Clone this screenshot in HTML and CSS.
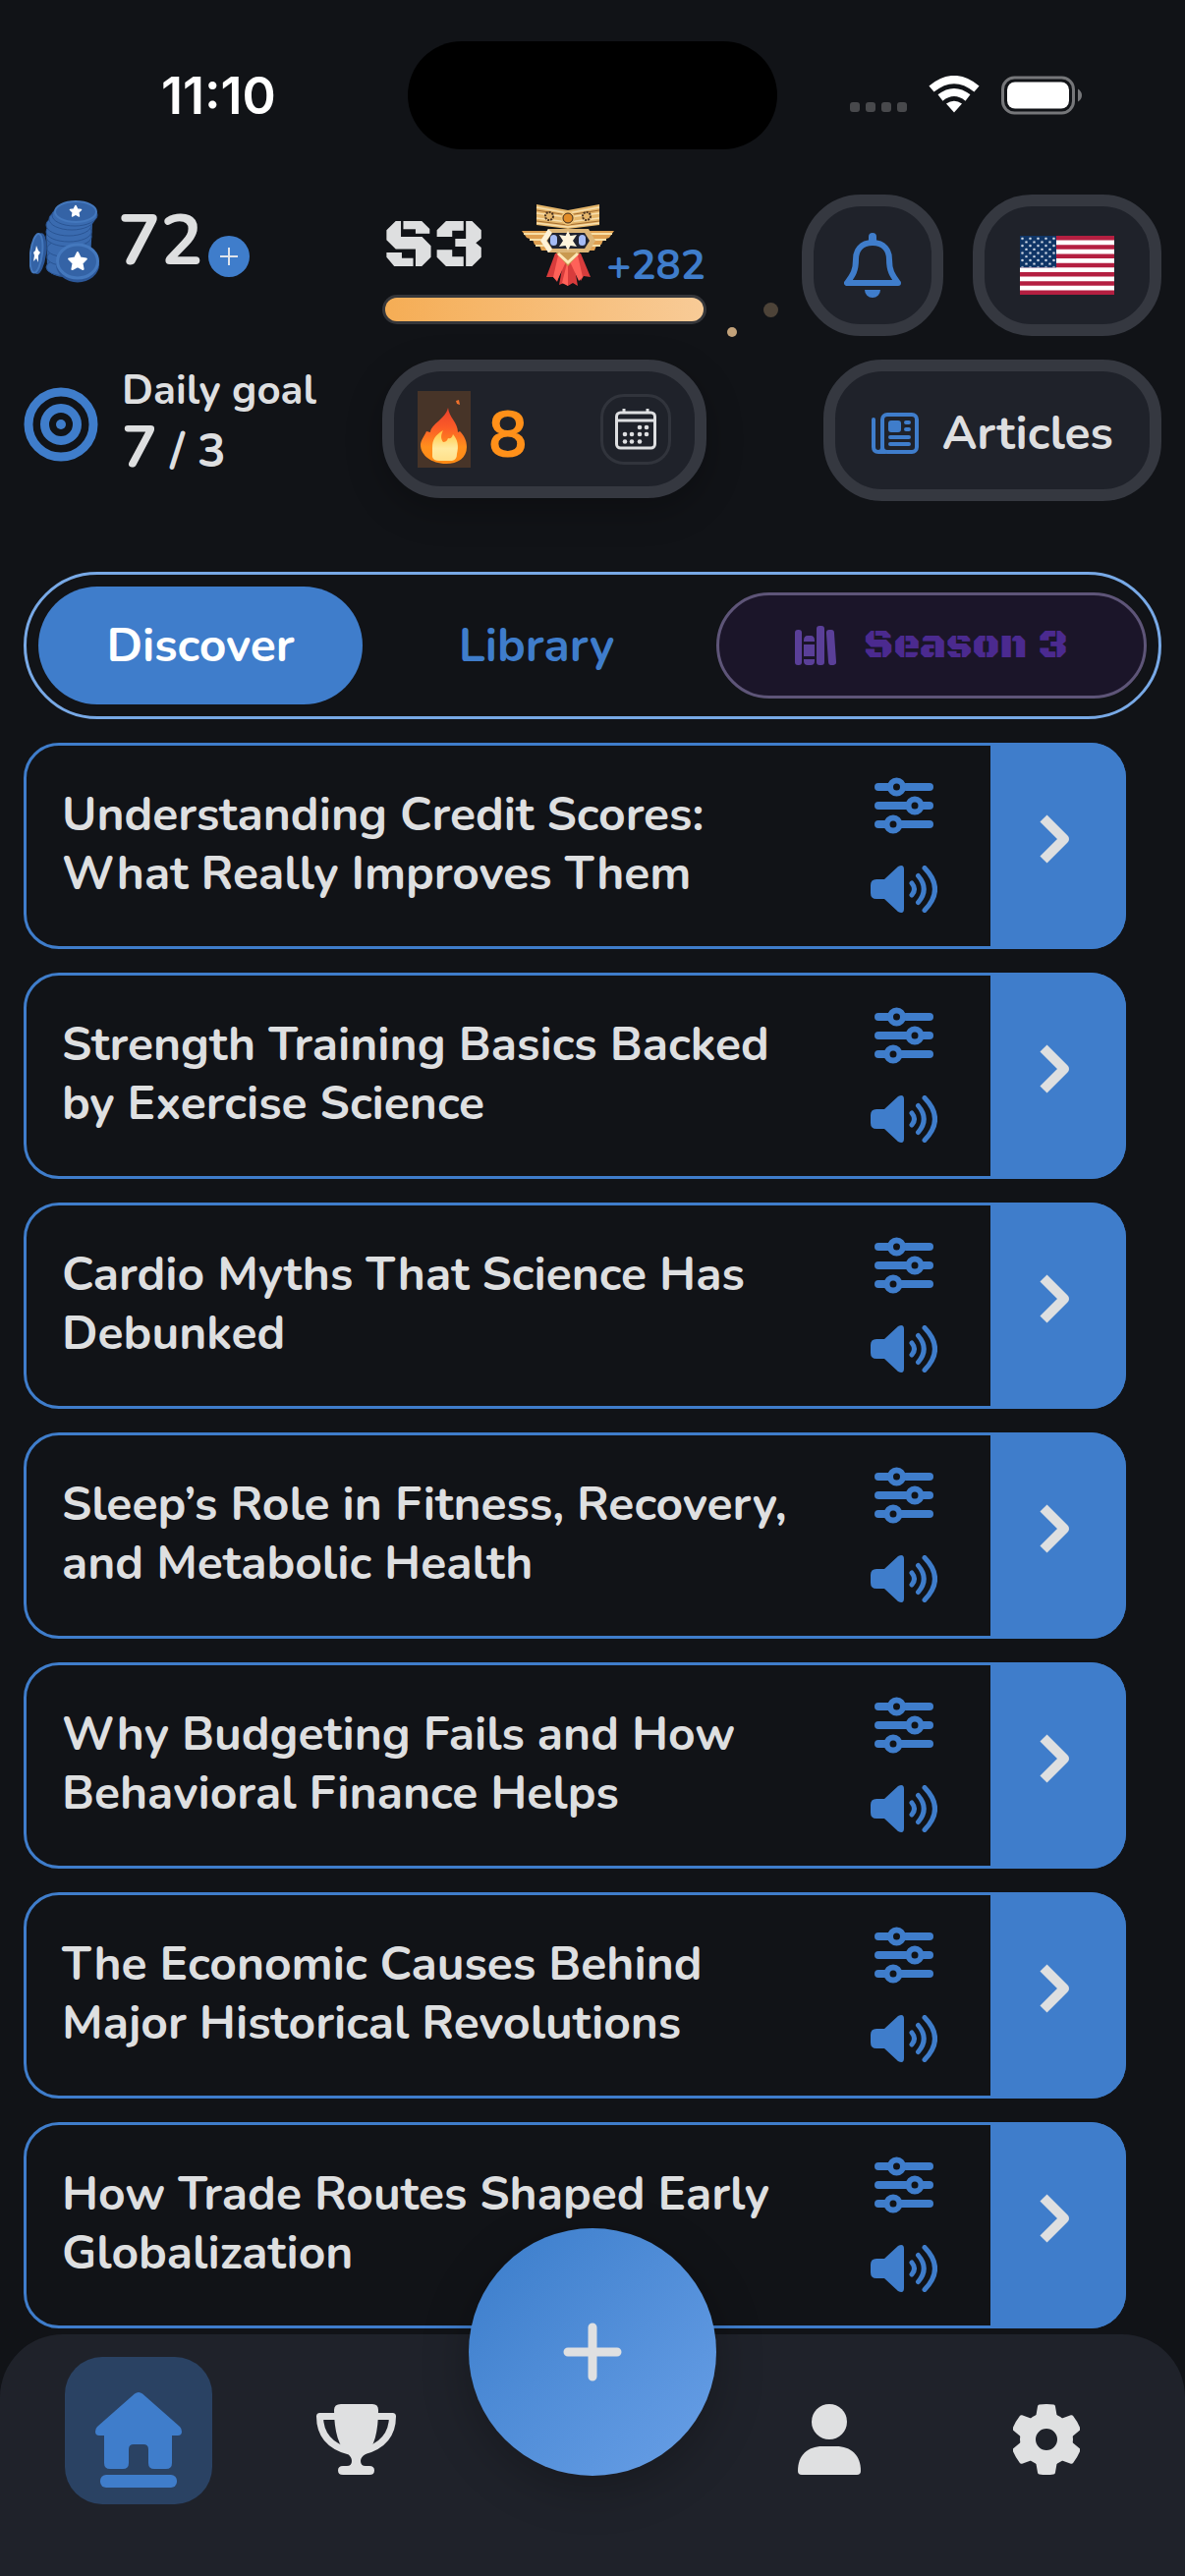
FILE: index.html
```html
<!DOCTYPE html>
<html lang="en">
<head>
    <meta charset="UTF-8">
    <meta name="viewport" content="width=device-width, initial-scale=1.0">
    <title>Discover</title>
    <link rel="stylesheet" href="styles.css">
</head>
<body>
    <!-- shared icons -->
    <svg class="sprite" aria-hidden="true">
        <symbol id="sliders" viewBox="0 0 60 58">
            <g fill="none" stroke="currentColor" stroke-width="8" stroke-linecap="round">
                <path d="M4 10H14M32 10H56M4 29H32M50 29H56M4 48H11M27 48H56"/>
                <g stroke-width="6">
                    <circle cx="22.500" cy="10" r="6.500"/>
                    <circle cx="41" cy="29" r="6.500"/>
                    <circle cx="19" cy="48" r="6.500"/>
                </g>
            </g>
        </symbol>
        <symbol id="volume" viewBox="0 0 68 48">
            <path fill="currentColor" d="M6 14H14L28 1Q34 -2 34 4V44Q34 50 28 47L14 34H6Q0 34 0 28V20Q0 14 6 14Z"/>
            <path fill="none" stroke="currentColor" stroke-width="5" stroke-linecap="round" d="M42 18Q47 24 42 30M48.500 10.500Q60 24 48.500 37.500M55 2.500Q76 24 55 45.500"/>
        </symbol>
        <symbol id="chevron" viewBox="0 0 32 50">
            <path fill="none" stroke="currentColor" stroke-width="10" stroke-linejoin="round" d="M4 4L25 25L4 46"/>
        </symbol>
        <symbol id="star" viewBox="-10 -10 20 20">
            <path fill="#fff" stroke="#fff" stroke-width="2" stroke-linejoin="round" d="M0 -8L2.500 -3L8 -2.300L4 1.700L5 7.200L0 4.500L-5 7.200L-4 1.700L-8 -2.300L-2.500 -3Z"/>
        </symbol>
    </svg>

    <div class="status-bar">
        <div class="status-time">11:10</div>
        <div class="island"></div>
        <div class="status-icons">
            <svg class="signal" viewBox="0 0 58 38" fill="#48494c">
                <rect x="0" y="27" width="10" height="10" rx="3"/>
                <rect x="16" y="27" width="10" height="10" rx="3"/>
                <rect x="32" y="27" width="10" height="10" rx="3"/>
                <rect x="48" y="27" width="10" height="10" rx="3"/>
            </svg>
            <svg class="wifi" viewBox="0 0 52 38" fill="none" stroke="#fff">
                <path stroke-width="8" d="M3 13.500Q26 -5.500 49 13.500"/>
                <path stroke-width="8" d="M12 22.500Q26 11.500 40 22.500"/>
                <path fill="#fff" stroke="none" d="M18 28.500Q26 23 34 28.500L26 37.500Z"/>
            </svg>
            <svg class="battery" viewBox="0 0 82 40">
                <rect x="1.500" y="2" width="72" height="36" rx="12" fill="none" stroke="#76777a" stroke-width="3"/>
                <rect x="6" y="6.500" width="63" height="27" rx="8" fill="#fff"/>
                <path d="M78 13.500Q82 16 82 20T78 26.500Z" fill="#76777a"/>
            </svg>
        </div>
    </div>

    <header class="header">
        <div class="coins">
            <svg class="coins-icon" viewBox="0 0 72 84">
                <path fill="#3464a8" d="M17 30L18 70Q24 78 36 78L62 60L64 24L68 12L24 12Z"/>
                <g fill="#3a6bb0" stroke="#2a5594">
                    <ellipse cx="37" cy="68" rx="20" ry="9"/>
                    <ellipse cx="39" cy="58" rx="21" ry="9"/>
                    <ellipse cx="39" cy="49" rx="21" ry="9"/>
                    <ellipse cx="40" cy="37" rx="23" ry="10"/>
                    <ellipse cx="40" cy="32" rx="23" ry="10"/>
                    <ellipse cx="40" cy="25" rx="23" ry="11"/>
                    <ellipse cx="43" cy="19" rx="23" ry="11"/>
                    <ellipse cx="46" cy="15" rx="23" ry="11"/>
                </g>
                <ellipse cx="47" cy="11.500" rx="21" ry="10.500" fill="#3463a6" stroke="#4478bd" stroke-width="2"/>
                <ellipse cx="49" cy="65" rx="22" ry="18.500" fill="#2c5798"/>
                <ellipse cx="49" cy="62" rx="20.500" ry="17" fill="#3463a6" stroke="#4478bd" stroke-width="3"/>
                <g transform="rotate(7 9 54)">
                    <ellipse cx="10" cy="54" rx="7" ry="21" fill="#2c5798"/>
                    <ellipse cx="7" cy="54" rx="6" ry="20" fill="#3463a6" stroke="#4478bd" stroke-width="2"/>
                </g>
                <use href="#star" x="38" y="4" width="18" height="14"/>
                <use href="#star" x="38" y="51" width="22" height="22"/>
                <path fill="#fff" d="M7 46L9 51L11 53L9 56L9 63L7 59L4 62L5 56L4 53L6 51Z"/>
            </svg>
            <span class="coins-count">72</span>
            <button class="coins-add" aria-label="Add coins">
                <svg viewBox="0 0 18 18" fill="none" stroke="#dfe3ea" stroke-width="2"><path d="M9 0V18M0 9H18"/></svg>
            </button>
        </div>

        <div class="season">
            <div class="season-top">
                <span class="season-name">S3</span>
                <svg class="medal" viewBox="0 0 94 84">
                    <path fill="#d83c3c" d="M34 50L25 74L32 74L36 79L42 60L38 82L43 80L47 83L52 80L57 83L53 60L60 78L63 73L70 74L60 50Z"/>
                    <path fill="#ff6259" d="M37 52L32 74L36 78L47 54ZM57 52L62 74L58 78L47 54ZM47 56L41 80L47 83Z"/>
                    <path fill="#e0a152" d="M0 27H94L89 34L83 36L81 41L76 42L74 47H20L18 42L13 41L11 36L5 34Z"/>
                    <path fill="none" stroke="#f8dfa7" stroke-width="2" d="M2 30H26M8 36H24M14 42H24M92 30H68M86 36H70M80 42H70"/>
                    <path fill="#e5b66b" d="M15 0L47 6L79 0V21L47 25L15 21Z"/>
                    <path fill="none" stroke="#f7dfae" stroke-width="1.500" d="M15 3L47 9L79 3M15 9L47 13L79 9M15 14L47 18L79 14M15 19L47 23L79 19"/>
                    <path fill="none" stroke="#a56d30" d="M15 6L47 11L79 6M15 17L47 21L79 17"/>
                    <circle cx="28" cy="12" r="4" fill="#e5b66b" stroke="#4a3320" stroke-width="2" stroke-dasharray="2 1"/>
                    <circle cx="66" cy="12" r="4" fill="#e5b66b" stroke="#4a3320" stroke-width="2" stroke-dasharray="2 1"/>
                    <circle cx="47" cy="14" r="7" fill="#f0c478"/>
                    <circle cx="47" cy="14" r="5" fill="#e28d29" stroke="#3d2a1c" stroke-width="1"/>
                    <path fill="#c9994f" d="M34 48L47 63L60 48Z"/>
                    <path fill="none" stroke="#fbe7b6" stroke-width="3" d="M37 50L47 59L57 50"/>
                    <path fill="#dcb577" d="M27 25H68L75 37L68 49H27L19 37Z"/>
                    <path fill="#fff2d8" d="M27 25L31 29L25 37L31 46L27 49L19 37Z"/>
                    <path fill="#202330" d="M31 29H64L69 37L64 45H31L26 37Z"/>
                    <rect x="29" y="31" width="7" height="11" rx="3.500" fill="#a5bbf5"/>
                    <rect x="58" y="31" width="7" height="11" rx="3.500" fill="#a5bbf5"/>
                    <path fill="#fff4dc" d="M47 27L49.500 32L56 31L52 37L56 43L49.500 42L47 47L44.500 42L38 43L42 37L38 31L44.500 32Z"/>
                </svg>
                <span class="season-gain">+282</span>
            </div>
            <div class="progress"><div class="progress-fill"></div></div>
            <span class="spark spark-near"></span>
            <span class="spark spark-far"></span>
        </div>

        <div class="header-actions">
            <button class="pill-button bell-button" aria-label="Notifications">
                <svg class="bell" viewBox="0 0 58 66">
                    <path fill="none" stroke="#3f7dcb" stroke-width="6" stroke-linejoin="round" d="M29 10C17 10 12 18 12 27C12 40 8 44 3 51H55C50 44 46 40 46 27C46 18 41 10 29 10Z"/>
                    <path fill="#3f7dcb" d="M25 10V4A4 4 0 0 1 33 4V10ZM21 58H37A8 8 0 0 1 21 58Z"/>
                </svg>
            </button>
            <button class="pill-button flag-button" aria-label="Language: English (US)">
                <svg class="flag" viewBox="0 0 96 65" preserveAspectRatio="none">
                    <defs>
                        <pattern id="canton-stars" width="8" height="8" patternUnits="userSpaceOnUse">
                            <circle cx="2.500" cy="3" r="1.300" fill="#d5deea"/>
                            <circle cx="6.500" cy="7" r="1.300" fill="#d5deea"/>
                        </pattern>
                    </defs>
                    <rect width="96" height="65" fill="#fff"/>
                    <path stroke="#b41f41" stroke-width="5" d="M0 2.500H96M0 12.500H96M0 22.500H96M0 32.500H96M0 42.500H96M0 52.500H96M0 62.500H96"/>
                    <rect width="37" height="35" fill="#0f3566"/>
                    <rect width="37" height="35" fill="url(#canton-stars)"/>
                </svg>
            </button>
        </div>

        <div class="goal">
            <svg class="target" viewBox="0 0 76 76">
                <g fill="none" stroke="#3f7dcb" stroke-width="9">
                    <circle cx="38" cy="38" r="33"/>
                    <circle cx="38" cy="38" r="16.500"/>
                </g>
                <circle cx="38" cy="38" r="5" fill="#3f7dcb"/>
            </svg>
            <div class="goal-text">
                <div class="goal-label">Daily goal</div>
                <div class="goal-value"><strong>7</strong> / 3</div>
            </div>
        </div>

        <div class="pill-button streak">
            <svg class="fire" viewBox="0 0 54 78">
                <defs>
                    <linearGradient id="flame" x1="0" y1="0" x2="0" y2="1">
                        <stop offset="0" stop-color="#e8402c"/>
                        <stop offset="0.350" stop-color="#fb5b27"/>
                        <stop offset="0.700" stop-color="#ff8f1c"/>
                        <stop offset="1" stop-color="#ff8a14"/>
                    </linearGradient>
                    <linearGradient id="core" x1="0" y1="0" x2="0" y2="1">
                        <stop offset="0" stop-color="#ffc63d"/>
                        <stop offset="0.600" stop-color="#ffeaa0"/>
                        <stop offset="1" stop-color="#ffe08a"/>
                    </linearGradient>
                </defs>
                <rect width="54" height="78" fill="#473428"/>
                <path fill="#f2702a" d="M39 10L42 9L43 14L40 13Z"/>
                <path fill="url(#flame)" d="M31 17C32 27 41 32 41 42L43 41C47 45 50 50 50 57C50 68 41 74 29 74C14 74 3 65 3 55C3 50 7 46 9 41L13 42C14 33 28 29 31 17Z"/>
                <path fill="url(#core)" d="M26 40C18 45 15 49 15 58V67Q16 71 22 71H35Q40 70 40 64C42 56 41 50 36 44C35 48 33 49 31 48C30 51 28 52 26 52C23 48 24 44 26 40Z"/>
            </svg>
            <span class="streak-count">8</span>
            <button class="calendar-button" aria-label="Streak calendar">
                <svg viewBox="0 0 42 42">
                    <g fill="none" stroke="#dedfe1" stroke-width="3">
                        <rect x="1.500" y="4" width="39" height="36" rx="4"/>
                        <path d="M2 12H40M9 0V4M33 0V4"/>
                    </g>
                    <g fill="#dedfe1">
                        <circle cx="25" cy="19" r="2.300"/><circle cx="32" cy="19" r="2.300"/>
                        <circle cx="10" cy="26" r="2.300"/><circle cx="17" cy="26" r="2.300"/><circle cx="25" cy="26" r="2.300"/><circle cx="32" cy="26" r="2.300"/>
                        <circle cx="10" cy="33.500" r="2.300"/><circle cx="17" cy="33.500" r="2.300"/><circle cx="25" cy="33.500" r="2.300"/>
                    </g>
                </svg>
            </button>
        </div>

        <div class="header-actions">
            <button class="pill-button articles-button">
                <svg class="newspaper" viewBox="0 0 48 42">
                    <g fill="none" stroke="#3f7dcb" stroke-width="4" stroke-linecap="round">
                        <rect x="11" y="2" width="35" height="38" rx="5"/>
                        <path d="M2 7V35Q2 40 7 40H14M11 36Q11 40 7 40"/>
                        <path d="M19 25H38M19 32H38M35 10H38M35 17H38"/>
                    </g>
                    <rect x="17" y="8" width="13" height="12" rx="3" fill="#3f7dcb"/>
                </svg>
                Articles
            </button>
        </div>
    </header>

    <nav class="tabs">
        <button class="tab tab-active">Discover</button>
        <button class="tab">Library</button>
        <button class="tab tab-season">
            <svg class="books" viewBox="0 0 43 40" fill="#5a3f98">
                <rect x="0" y="4" width="7" height="36" rx="3"/>
                <path d="M9 15Q9 10 13 10H16Q20 10 20 15V16H9ZM9 19H20V31H9ZM9 34H20V36Q20 40 16 40H13Q9 40 9 36Z"/>
                <rect x="22" y="0" width="8" height="40" rx="3"/>
                <rect x="33" y="4" width="8" height="36" rx="3" transform="rotate(-4 37 22)"/>
            </svg>
            Season 3
        </button>
    </nav>

    <main class="list">
        <article class="card">
            <h2 class="card-title">Understanding Credit Scores: What Really Improves Them</h2>
            <div class="card-tools">
                <button aria-label="Options"><svg class="sliders"><use href="#sliders"/></svg></button>
                <button aria-label="Listen"><svg class="volume"><use href="#volume"/></svg></button>
            </div>
            <button class="card-open" aria-label="Open"><svg class="chevron"><use href="#chevron"/></svg></button>
        </article>
        <article class="card">
            <h2 class="card-title">Strength Training Basics Backed by Exercise Science</h2>
            <div class="card-tools">
                <button aria-label="Options"><svg class="sliders"><use href="#sliders"/></svg></button>
                <button aria-label="Listen"><svg class="volume"><use href="#volume"/></svg></button>
            </div>
            <button class="card-open" aria-label="Open"><svg class="chevron"><use href="#chevron"/></svg></button>
        </article>
        <article class="card">
            <h2 class="card-title">Cardio Myths That Science Has Debunked</h2>
            <div class="card-tools">
                <button aria-label="Options"><svg class="sliders"><use href="#sliders"/></svg></button>
                <button aria-label="Listen"><svg class="volume"><use href="#volume"/></svg></button>
            </div>
            <button class="card-open" aria-label="Open"><svg class="chevron"><use href="#chevron"/></svg></button>
        </article>
        <article class="card">
            <h2 class="card-title">Sleep’s Role in Fitness, Recovery, and Metabolic Health</h2>
            <div class="card-tools">
                <button aria-label="Options"><svg class="sliders"><use href="#sliders"/></svg></button>
                <button aria-label="Listen"><svg class="volume"><use href="#volume"/></svg></button>
            </div>
            <button class="card-open" aria-label="Open"><svg class="chevron"><use href="#chevron"/></svg></button>
        </article>
        <article class="card">
            <h2 class="card-title">Why Budgeting Fails and How Behavioral Finance Helps</h2>
            <div class="card-tools">
                <button aria-label="Options"><svg class="sliders"><use href="#sliders"/></svg></button>
                <button aria-label="Listen"><svg class="volume"><use href="#volume"/></svg></button>
            </div>
            <button class="card-open" aria-label="Open"><svg class="chevron"><use href="#chevron"/></svg></button>
        </article>
        <article class="card">
            <h2 class="card-title">The Economic Causes Behind Major Historical Revolutions</h2>
            <div class="card-tools">
                <button aria-label="Options"><svg class="sliders"><use href="#sliders"/></svg></button>
                <button aria-label="Listen"><svg class="volume"><use href="#volume"/></svg></button>
            </div>
            <button class="card-open" aria-label="Open"><svg class="chevron"><use href="#chevron"/></svg></button>
        </article>
        <article class="card">
            <h2 class="card-title">How Trade Routes Shaped Early Globalization</h2>
            <div class="card-tools">
                <button aria-label="Options"><svg class="sliders"><use href="#sliders"/></svg></button>
                <button aria-label="Listen"><svg class="volume"><use href="#volume"/></svg></button>
            </div>
            <button class="card-open" aria-label="Open"><svg class="chevron"><use href="#chevron"/></svg></button>
        </article>
    </main>

    <nav class="bottom-nav">
        <button class="nav-item nav-item-active" aria-label="Home">
            <svg class="home" viewBox="0 0 88 78" fill="#3f7dcb">
                <path d="M40 1.500Q44 -1.500 48 1.500L86 35Q88 37 88 40Q88 44 84 44H78V72Q78 78 72 78H60Q54 78 54 72V58Q54 53 49 53H39Q34 53 34 58V72Q34 78 28 78H15Q9 78 9 72V44H4Q0 44 0 40Q0 37 2 35Z"/>
            </svg>
            <span class="nav-mark"></span>
        </button>
        <button class="nav-item" aria-label="Leagues">
            <svg class="trophy" viewBox="0 0 82 72">
                <path fill="#dfe0e1" d="M25 0H57Q63 0 63 6C63 28 59 44 50 51Q45 54 45 58Q45 63 50 63H54Q59 63 59 67.500Q59 72 54 72H27Q22 72 22 67.500Q22 63 27 63H31Q36 63 36 58Q36 54 32 51C23 44 18 28 18 6Q18 0 25 0Z"/>
                <path fill="none" stroke="#dfe0e1" stroke-width="7" stroke-linejoin="round" d="M20 12.500H3.500C3.500 32 15 43 33 48M62 12.500H77.500C77.500 32 66 43 48 48"/>
            </svg>
        </button>
        <div class="fab-slot">
            <button class="fab" aria-label="Create">
                <svg viewBox="0 0 60 60"><path fill="none" stroke="#dfe0e1" stroke-width="9" stroke-linecap="round" d="M30 5V55M5 30H55"/></svg>
            </button>
        </div>
        <button class="nav-item" aria-label="Profile">
            <svg class="person" viewBox="0 0 64 72" fill="#dfe0e1">
                <circle cx="32" cy="18" r="18"/>
                <path d="M25 43H39C54 43 64 52 64 68Q64 72 60 72H4Q0 72 0 68C0 52 10 43 25 43Z"/>
            </svg>
        </button>
        <button class="nav-item" aria-label="Settings">
            <svg class="gear" viewBox="-34 -36 68 72">
                <circle r="19" fill="none" stroke="#dfe0e1" stroke-width="16"/>
                <g fill="#dfe0e1" stroke="#dfe0e1" stroke-width="4" stroke-linejoin="round">
                    <path id="tooth" d="M-7 -33.500Q0 -34.500 7 -33.500L9 -22H-9Z"/>
                    <use href="#tooth" transform="rotate(60)"/>
                    <use href="#tooth" transform="rotate(120)"/>
                    <use href="#tooth" transform="rotate(180)"/>
                    <use href="#tooth" transform="rotate(240)"/>
                    <use href="#tooth" transform="rotate(300)"/>
                </g>
            </svg>
        </button>
    </nav>
</body>
</html>
```

FILE: styles.css
```css
* {
    box-sizing: border-box;
}
body {
    margin: 0;
    padding-bottom: 252px;
    background-color: #111317;
    color: #dedfe0;
    font-family: Nunito, Lato, sans-serif;
    font-size: 48px;
    line-height: 60px;
}
button {
    margin: 0;
    padding: 0;
    border: none;
    background: none;
    color: inherit;
    font: inherit;
    cursor: pointer;
}
svg {
    display: block;
    flex-shrink: 0;
}
.sprite {
    position: absolute;
    width: 0;
    height: 0;
}

/* status bar */
.status-bar {
    display: grid;
    grid-template-columns: 1fr 376px 1fr;
    align-items: center;
    padding: 42px 0 46px;
}
.status-time {
    padding: 2px 0 0 30px;
    text-align: center;
    font-family: Inter, sans-serif;
    font-weight: 600;
    font-size: 52px;
    color: #fff;
}
.island {
    height: 110px;
    border-radius: 55px;
    background-color: #000;
}
.status-icons {
    display: flex;
    justify-content: center;
    gap: 22px;
    padding-right: 32px;
}
.signal {
    width: 58px;
    height: 38px;
}
.wifi {
    width: 52px;
    height: 38px;
}
.battery {
    width: 82px;
    height: 40px;
}

/* header */
.header {
    display: grid;
    grid-template-columns: 365px 330px 1fr;
    grid-auto-rows: 144px;
    row-gap: 24px;
    padding: 0 24px;
}
.coins {
    display: flex;
    align-items: flex-start;
    padding: 6px;
}
.coins-icon {
    width: 72px;
    height: 84px;
}
.coins-count {
    margin-left: 18px;
    font-weight: 700;
    font-size: 72px;
    line-height: 82px;
}
.coins-add {
    display: flex;
    align-items: center;
    justify-content: center;
    width: 42px;
    height: 42px;
    margin: 36px 0 0 6px;
    border-radius: 50%;
    background-color: #3f7dcb;
}
.coins-add svg {
    width: 18px;
    height: 18px;
}
.season {
    position: relative;
    padding-top: 10px;
}
.season-top {
    display: flex;
    justify-content: space-between;
    padding: 0 1px;
}
.season-name {
    font-family: "Black Ops One", "DejaVu Sans", sans-serif;
    font-weight: 400;
    font-size: 72px;
    line-height: 84px;
}
.medal {
    width: 94px;
    height: 84px;
    margin: 0 -8px 0 auto;
}
.season-gain {
    align-self: flex-end;
    font-weight: 700;
    font-size: 42px;
    line-height: 42px;
    color: #3f7dcb;
}
.progress {
    height: 30px;
    margin-top: 8px;
    padding: 3px;
    border-radius: 15px;
    background-color: #35363a;
}
.progress-fill {
    height: 24px;
    border-radius: 12px;
    background: linear-gradient(90deg, #f5ad55, #f8cb97);
}
.spark {
    position: absolute;
    border-radius: 50%;
}
.spark-near {
    left: 351px;
    top: 135px;
    width: 10px;
    height: 10px;
    background-color: #c3a27a;
}
.spark-far {
    left: 388px;
    top: 110px;
    width: 15px;
    height: 15px;
    background-color: #4d4338;
}
.header-actions {
    display: flex;
    justify-content: flex-end;
    gap: 30px;
}
.pill-button {
    display: flex;
    align-items: center;
    justify-content: center;
    height: 144px;
    border: 12px solid #353840;
    border-radius: 60px;
    background-color: #1f222a;
}
.bell-button {
    width: 144px;
}
.bell {
    width: 58px;
    height: 66px;
}
.flag-button {
    width: 192px;
}
.flag {
    width: 96px;
    height: 60px;
}
.articles-button {
    gap: 24px;
    padding: 6px 37px 0;
    font-weight: 700;
}
.newspaper {
    width: 48px;
    height: 42px;
}

.goal {
    display: flex;
    align-items: center;
    gap: 24px;
    height: 132px;
}
.target {
    width: 76px;
    height: 76px;
}
.goal-text {
    padding-bottom: 4px;
}
.goal-label {
    font-weight: 700;
    font-size: 42px;
    line-height: 54px;
}
.goal-value {
    font-weight: 700;
}
.goal-value strong {
    font-weight: 700;
    font-size: 60px;
}
.streak {
    height: 141px;
    padding: 0 24px;
    justify-content: flex-start;
    box-shadow: 0 12px 36px rgba(0, 0, 0, 0.25);
}
.fire {
    width: 54px;
    height: 78px;
}
.streak-count {
    margin-left: 18px;
    padding-top: 12px;
    font-weight: 700;
    font-size: 66px;
    color: #ff9019;
}
.calendar-button {
    display: flex;
    align-items: center;
    justify-content: center;
    width: 72px;
    height: 72px;
    margin-left: auto;
    border: 3px solid #31343c;
    border-radius: 24px;
}
.calendar-button svg {
    width: 42px;
    height: 42px;
}

/* tabs */
.tabs {
    display: flex;
    align-items: center;
    height: 150px;
    margin: 72px 24px 24px;
    padding: 12px;
    border: 3px solid #78a9e6;
    border-radius: 75px;
}
.tab {
    flex: 1;
    height: 120px;
    border-radius: 60px;
    font-weight: 700;
    color: #3f7dcb;
}
.tab-active {
    flex: 0 0 330px;
    background-color: #3f7dcb;
    color: #fff;
}
.tab-season {
    display: flex;
    flex: 0 0 438px;
    align-items: center;
    justify-content: center;
    gap: 27px;
    height: 108px;
    margin-left: 6px;
    border: 3px solid #5e5578;
    border-radius: 54px;
    background-color: #1b1529;
    font-family: "Black Ops One", "DejaVu Sans", sans-serif;
    font-weight: 400;
    font-size: 42px;
    color: #4b2a8f;
}
.books {
    width: 43px;
    height: 40px;
}

/* article list */
.list {
    display: flex;
    flex-direction: column;
    gap: 24px;
    padding: 0 60px 0 24px;
}
.card {
    display: flex;
    min-height: 210px;
    border: 3px solid #3f7dcb;
    border-radius: 36px;
}
.card-title {
    flex: 1;
    align-self: center;
    margin: 0;
    padding: 0 16px 4px 36px;
    font-weight: 700;
    font-size: 48px;
    line-height: 60px;
}
.card-tools {
    display: flex;
    flex-direction: column;
    align-items: center;
    gap: 32px;
    width: 176px;
    padding-top: 32px;
    color: #3f7dcb;
}
.sliders {
    width: 60px;
    height: 58px;
}
.volume {
    width: 68px;
    height: 48px;
}
.card-open {
    display: flex;
    align-items: center;
    justify-content: center;
    width: 138px;
    margin: -3px -3px -3px 0;
    padding: 0 6px 14px 0;
    border-radius: 0 36px 36px 0;
    background-color: #3f7dcb;
    color: #dedfe0;
}
.chevron {
    width: 32px;
    height: 50px;
}

/* bottom navigation */
.bottom-nav {
    position: fixed;
    right: 0;
    bottom: 0;
    left: 0;
    display: flex;
    justify-content: space-between;
    height: 246px;
    padding: 23px 66px 0;
    border-radius: 64px 64px 0 0;
    background-color: #1f222a;
}
.nav-item {
    display: flex;
    flex-direction: column;
    align-items: center;
    justify-content: center;
    gap: 6px;
    width: 150px;
    height: 150px;
    padding-top: 18px;
    border-radius: 38px;
}
.nav-item-active {
    background-color: #2a4263;
}
.home {
    width: 88px;
    height: 78px;
}
.nav-mark {
    width: 78px;
    height: 13px;
    border-radius: 6px;
    background-color: #3f7dcb;
}
.trophy {
    width: 82px;
    height: 72px;
}
.person {
    width: 64px;
    height: 72px;
}
.gear {
    width: 68px;
    height: 72px;
}
.fab-slot {
    position: relative;
    width: 188px;
}
.fab {
    position: absolute;
    top: -131px;
    left: -32px;
    display: flex;
    align-items: center;
    justify-content: center;
    width: 252px;
    height: 252px;
    border-radius: 50%;
    background: linear-gradient(135deg, #3f80cd 10%, #649ce4 90%);
    box-shadow: 0 12px 48px rgba(0, 0, 0, 0.25);
}
.fab svg {
    width: 60px;
    height: 60px;
}
```
